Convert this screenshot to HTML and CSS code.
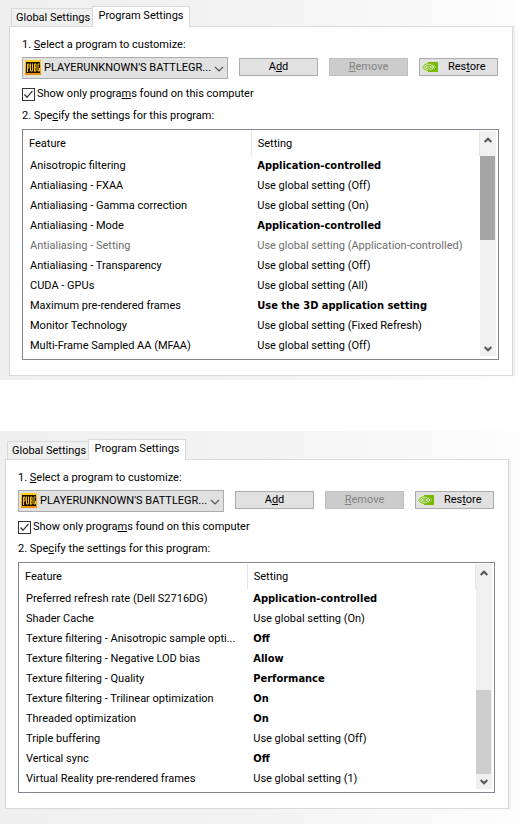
FILE: index.html
```html
<!DOCTYPE html>
<html lang="en">
<head>
<meta charset="utf-8">
<title>Program Settings</title>
<link rel="stylesheet" href="styles.css">
</head>
<body>
<svg class="defs" aria-hidden="true">
  <defs>
    <linearGradient id="gold" x1="0" y1="0" x2="0" y2="1">
      <stop offset="0" stop-color="#ffd21c"/><stop offset=".5" stop-color="#f5b400"/><stop offset="1" stop-color="#f08a00"/>
    </linearGradient>
  </defs>
  <symbol id="pubg" viewBox="0 0 16 15">
    <rect width="16" height="15" fill="url(#gold)"/>
    <rect x="1" y="2" width="14" height="11" fill="#1b1204"/>
    <path d="M2.500 12V4h1.500v4H2.500M5.500 3.500v7.500h2V3.500M9.500 11.500V4h1.500v3.500H9.500M11 7.500v3.500H9.500M14.500 4h-1.500v7h1.500V8" fill="none" stroke="#f8bd12" stroke-width="1"/>
  </symbol>
  <symbol id="nvidia" viewBox="0 0 16 10">
    <rect width="16" height="10" fill="#dfe8cf"/>
    <path d="M6 0h10v10H6V8.500c4 0 6-1.500 8-3.500C12 3 10 1.500 6 1.500z" fill="#76b900"/>
    <path d="M.7 5.200C2 2.800 4 1.700 6.500 1.700c3 0 5 1.400 6.700 3.300C11.500 7 9.500 8.400 6.500 8.400 4 8.400 2 7.400.7 5.200z" fill="#e6efda" stroke="#76b900" stroke-width="1"/>
    <path d="M2.700 5.200C3.500 3.900 5 3.300 6.700 3.300c1.800 0 3 .8 4 1.800-1 1.200-2.300 1.800-4 1.800-2 0-3.200-.6-4-1.700z" fill="none" stroke="#76b900" stroke-width="1"/>
    <path d="M5 5.200c.5-.7 2.500-.8 3.200 0-.6.600-2 .7-2.700.2" fill="none" stroke="#76b900" stroke-width=".9"/>
  </symbol>
  <symbol id="combo-arrow" viewBox="0 0 10 6"><path d="M1 1l4 4 4-4" fill="none" stroke="#555" stroke-width="1.200"/></symbol>
  <symbol id="up" viewBox="0 0 8 6"><path d="M.7 5L4 1.700 7.300 5" fill="none" stroke="#555" stroke-width="2"/></symbol>
  <symbol id="down" viewBox="0 0 8 6"><path d="M.7 1L4 4.300 7.300 1" fill="none" stroke="#555" stroke-width="2"/></symbol>
  <symbol id="tick" viewBox="0 0 13 13"><path d="M2.500 6.500L5 9.300l5.500-6.500" fill="none" stroke="#333" stroke-width="1.300"/></symbol>
</svg>

<section class="window window-first">
  <div class="tabs" role="tablist">
    <button class="tab" role="tab" aria-selected="false">Global Settings</button>
    <button class="tab active" role="tab" aria-selected="true">Program Settings</button>
  </div>
  <div class="panel">
    <label class="step" for="program-1">1. <u>S</u>elect a program to customize:</label>
    <div class="controls">
      <div class="combo">
        <svg class="game"><use href="#pubg"/></svg>
        <select id="program-1"><option>PLAYERUNKNOWN'S BATTLEGR...</option></select>
        <svg class="arrow"><use href="#combo-arrow"/></svg>
      </div>
      <button class="btn">A<u>d</u>d</button>
      <button class="btn" disabled><u>R</u>emove</button>
      <button class="btn with-logo"><svg class="logo"><use href="#nvidia"/></svg><span>Res<u>t</u>ore</span></button>
    </div>
    <div class="check">
      <span class="box"><input type="checkbox" id="found-1" checked><svg><use href="#tick"/></svg></span>
      <label for="found-1">Show only progra<u>m</u>s found on this computer</label>
    </div>
    <p class="step">2. Spe<u>c</u>ify the settings for this program:</p>
    <div class="list">
      <table>
        <thead><tr><th>Feature</th><th>Setting</th></tr></thead>
        <tbody>
          <tr><td>Anisotropic filtering</td><td class="set">Application-controlled</td></tr>
          <tr><td>Antialiasing - FXAA</td><td>Use global setting (Off)</td></tr>
          <tr><td>Antialiasing - Gamma correction</td><td>Use global setting (On)</td></tr>
          <tr><td>Antialiasing - Mode</td><td class="set">Application-controlled</td></tr>
          <tr class="off"><td>Antialiasing - Setting</td><td>Use global setting (Application-controlled)</td></tr>
          <tr><td>Antialiasing - Transparency</td><td>Use global setting (Off)</td></tr>
          <tr><td>CUDA - GPUs</td><td>Use global setting (All)</td></tr>
          <tr><td>Maximum pre-rendered frames</td><td class="set">Use the 3D application setting</td></tr>
          <tr><td>Monitor Technology</td><td>Use global setting (Fixed Refresh)</td></tr>
          <tr><td>Multi-Frame Sampled AA (MFAA)</td><td>Use global setting (Off)</td></tr>
        </tbody>
      </table>
      <div class="scrollbar">
        <svg><use href="#up"/></svg>
        <div class="track"><div class="thumb dragging"></div></div>
        <svg><use href="#down"/></svg>
      </div>
    </div>
  </div>
</section>

<section class="window window-second">
  <div class="tabs" role="tablist">
    <button class="tab" role="tab" aria-selected="false">Global Settings</button>
    <button class="tab active" role="tab" aria-selected="true">Program Settings</button>
  </div>
  <div class="panel">
    <label class="step" for="program-2">1. <u>S</u>elect a program to customize:</label>
    <div class="controls">
      <div class="combo">
        <svg class="game"><use href="#pubg"/></svg>
        <select id="program-2"><option>PLAYERUNKNOWN'S BATTLEGR...</option></select>
        <svg class="arrow"><use href="#combo-arrow"/></svg>
      </div>
      <button class="btn">A<u>d</u>d</button>
      <button class="btn" disabled><u>R</u>emove</button>
      <button class="btn with-logo"><svg class="logo"><use href="#nvidia"/></svg><span>Res<u>t</u>ore</span></button>
    </div>
    <div class="check">
      <span class="box"><input type="checkbox" id="found-2" checked><svg><use href="#tick"/></svg></span>
      <label for="found-2">Show only progra<u>m</u>s found on this computer</label>
    </div>
    <p class="step">2. Spe<u>c</u>ify the settings for this program:</p>
    <div class="list">
      <table>
        <thead><tr><th>Feature</th><th>Setting</th></tr></thead>
        <tbody>
          <tr><td>Preferred refresh rate (Dell S2716DG)</td><td class="set">Application-controlled</td></tr>
          <tr><td>Shader Cache</td><td>Use global setting (On)</td></tr>
          <tr><td>Texture filtering - Anisotropic sample opti...</td><td class="set">Off</td></tr>
          <tr><td>Texture filtering - Negative LOD bias</td><td class="set">Allow</td></tr>
          <tr><td>Texture filtering - Quality</td><td class="set">Performance</td></tr>
          <tr><td>Texture filtering - Trilinear optimization</td><td class="set">On</td></tr>
          <tr><td>Threaded optimization</td><td class="set">On</td></tr>
          <tr><td>Triple buffering</td><td>Use global setting (Off)</td></tr>
          <tr><td>Vertical sync</td><td class="set">Off</td></tr>
          <tr><td>Virtual Reality pre-rendered frames</td><td>Use global setting (1)</td></tr>
        </tbody>
      </table>
      <div class="scrollbar">
        <svg><use href="#up"/></svg>
        <div class="track at-end"><div class="thumb"></div></div>
        <svg><use href="#down"/></svg>
      </div>
    </div>
  </div>
</section>
</body>
</html>
```
FILE: styles.css
```css
* { box-sizing: border-box; }

body {
  margin: 0;
  background: #fff;
  color: #000;
  font: 11px/16px Roboto, Tahoma, sans-serif;
}

svg { display: block; }
.defs { position: absolute; width: 0; height: 0; }
u { text-underline-offset: 1px; text-decoration-thickness: 1px; }

button, select {
  margin: 0;
  font: inherit;
  color: inherit;
  border-radius: 0;
}

.window {
  padding: 6px 2px 4px 9px;
  background: linear-gradient(to right, #efefef, #f3f3f3 50%, #fdfdfd);
}
.window-first { margin-right: 4px; }
.window-second {
  margin-top: 51px;
  padding: 8px 10px 15px 5px;
}

.tabs {
  display: flex;
  align-items: flex-end;
  padding-left: 2px;
}
.tab {
  height: 18px;
  padding: 0 4px;
  border: 1px solid #d9d9d9;
  border-width: 1px 0 0 1px;
  background: #f0f0f0;
  line-height: 16px;
  width: 81px;
  white-space: nowrap;
}
.tab.active {
  width: 98px;
  height: 21px;
  margin-bottom: -1px;
  padding-bottom: 3px;
  border-right-width: 1px;
  background: #fff;
  position: relative;
}

.panel {
  padding: 10px 13px 15px 12px;
  border: 1px solid #d9d9d9;
  background: #fff;
  box-shadow: 2px 0 #efefef;
}

.step { display: block; margin: 0; }

.controls {
  display: flex;
  align-items: flex-start;
  gap: 11px;
  margin-top: 4px;
  padding-right: 1px;
}
.combo {
  position: relative;
  flex: 1;
}
.combo select {
  appearance: none;
  display: block;
  width: 100%;
  height: 22px;
  padding: 0 16px 0 21px;
  border: 1px solid #adadad;
  background: #e1e1e1;
}
.game, .arrow { position: absolute; pointer-events: none; }
.game { left: 3px; top: 3px; width: 16px; height: 15px; }
.arrow { right: 4px; top: 9px; width: 10px; height: 6px; }

.btn {
  width: 79px;
  height: 18px;
  margin-top: 1px;
  padding: 0;
  border: 1px solid #adadad;
  background: #e1e1e1;
  line-height: 16px;
}
.btn:disabled {
  border-color: #bfbfbf;
  background: #ccc;
  color: #838383;
}
.with-logo {
  display: flex;
  align-items: center;
  gap: 10px;
  padding-left: 2px;
}
.logo { width: 16px; height: 10px; }

.check {
  display: flex;
  align-items: center;
  gap: 2px;
  margin: 7px 0 6px;
}
.box { position: relative; }
.box input {
  appearance: none;
  display: block;
  width: 13px;
  height: 13px;
  margin: 0;
  border: 1px solid #333;
  background: #fff;
}
.box svg {
  position: absolute;
  inset: 0;
  width: 13px;
  height: 13px;
  pointer-events: none;
}

.list {
  display: flex;
  margin-top: 5px;
  padding: 1px 2px 3px 0;
  border: 1px solid #828790;
}
table {
  flex: 1;
  align-self: flex-start;
  border-collapse: collapse;
  table-layout: fixed;
}
th, td {
  height: 20px;
  padding: 0 0 0 6px;
  text-align: left;
  font-weight: normal;
  white-space: nowrap;
}
td:first-child { padding-left: 7px; }
th { height: 25px; border-right: 1px solid #e5e5e5; }
th:first-child { width: 50%; }
.set {
  font-family: "DejaVu Sans Condensed", Tahoma, sans-serif;
  font-weight: bold;
}
.off { color: #6d6d6d; }

.scrollbar {
  display: flex;
  flex-direction: column;
  align-items: center;
  width: 16px;
  padding: 6px 0 4px;
  background: #f0f0f0;
}
.scrollbar svg { width: 8px; height: 6px; }
.track {
  display: flex;
  flex-direction: column;
  flex: 1;
  width: 100%;
  margin: 13px 0 5px;
}
.track.at-end { justify-content: flex-end; }
.thumb {
  width: 15px;
  height: 84px;
  background: #cdcdcd;
}
.thumb.dragging { background: #a6a6a6; }
```
